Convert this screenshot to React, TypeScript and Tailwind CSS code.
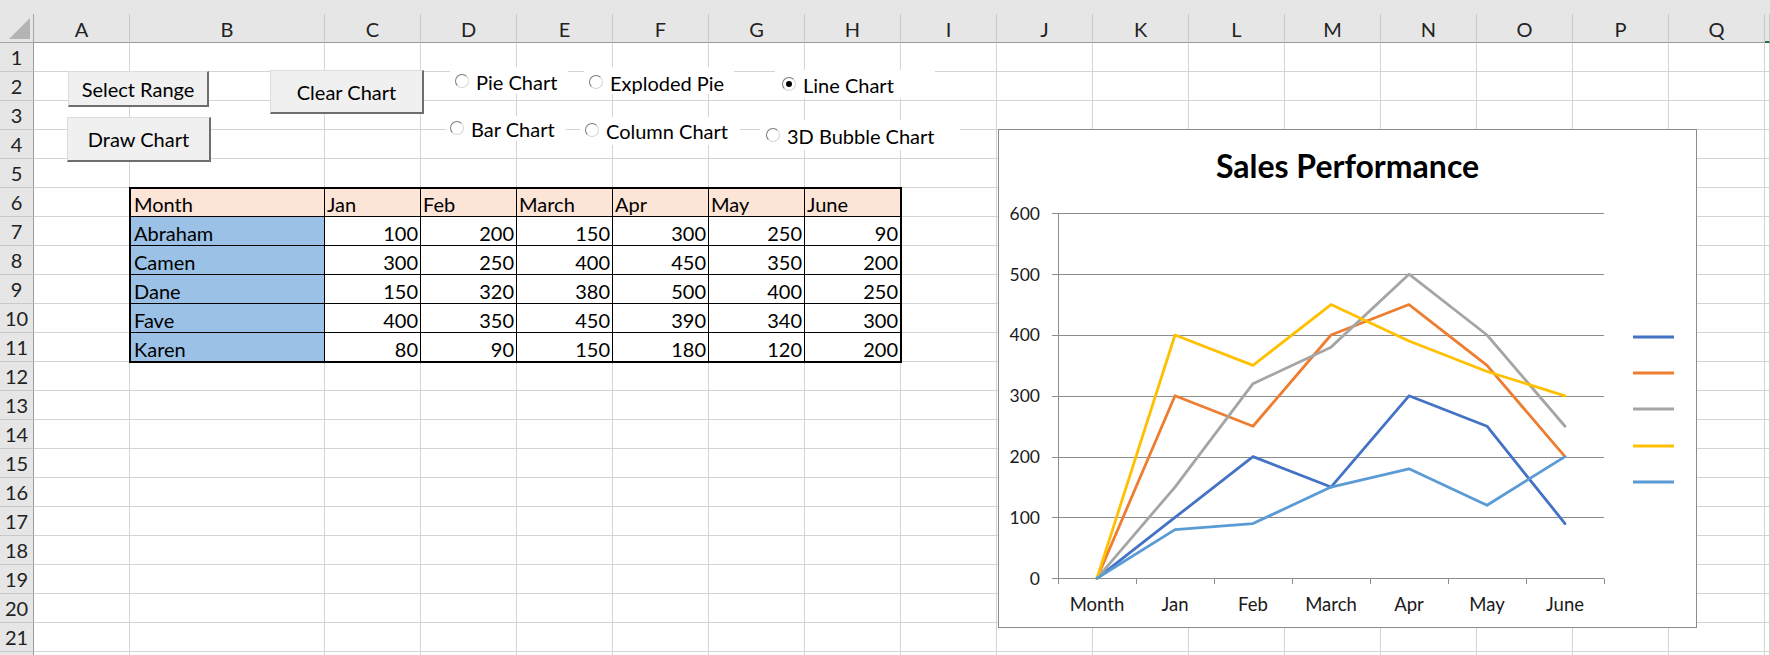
import React from 'react'

const COLS = ['A', 'B', 'C', 'D', 'E', 'F', 'G', 'H', 'I', 'J', 'K', 'L', 'M', 'N', 'O', 'P', 'Q', 'R']
const ROWS = Array.from({ length: 22 }, (_, i) => i + 1)

const MONTHS = ['Jan', 'Feb', 'March', 'Apr', 'May', 'June']
const PEOPLE = [
  { name: 'Abraham', values: [100, 200, 150, 300, 250, 90], color: '#4472c4' },
  { name: 'Camen', values: [300, 250, 400, 450, 350, 200], color: '#ed7d31' },
  { name: 'Dane', values: [150, 320, 380, 500, 400, 250], color: '#a5a5a5' },
  { name: 'Fave', values: [400, 350, 450, 390, 340, 300], color: '#ffc000' },
  { name: 'Karen', values: [80, 90, 150, 180, 120, 200], color: '#5b9bd5' },
]

const RADIOS = [
  { label: 'Pie Chart', box: 'left-[450px] top-[67px] w-[118px] h-[27px] pl-[5px] pt-[5px]' },
  { label: 'Exploded Pie', box: 'left-[584px] top-[67px] w-[150px] h-[27px] pl-[5px] pt-[6px]' },
  { label: 'Line Chart', box: 'left-[775px] top-[70px] w-[160px] h-[28px] pl-[7px] pt-[5px]', checked: true },
  { label: 'Bar Chart', box: 'left-[446px] top-[116px] w-[120px] h-[25px] pl-[4px] pt-[3px]' },
  { label: 'Column Chart', box: 'left-[580px] top-[117px] w-[160px] h-[28px] pl-[5px] pt-[4px]' },
  { label: '3D Bubble Chart', box: 'left-[760px] top-[120px] w-[200px] h-[30px] pl-[6px] pt-[6px]' },
]

// cells under the data table are skipped so grid auto-placement stays right
const inTable = (row: number, col: number) => row >= 6 && row <= 11 && col >= 1 && col <= 7

function DataTable() {
  return (
    <div className="col-start-3 col-end-10 row-start-7 row-end-13 -m-px relative z-10 border-2 border-black bg-black grid grid-cols-[193px_repeat(6,95px)] grid-rows-[27px_repeat(5,28px)] gap-px text-[20px] leading-[20px] text-black">
      <div className="bg-[#fce4d6] flex items-end pl-[3px] pb-[2px]">Month</div>
      {MONTHS.map((m) => (
        <div key={m} className="bg-[#fce4d6] flex items-end pl-[2px] pb-[2px]">
          {m}
        </div>
      ))}
      {PEOPLE.map((p) => (
        <React.Fragment key={p.name}>
          <div className="bg-[#9bc2e6] flex items-end pl-[3px] pb-[2px]">{p.name}</div>
          {p.values.map((v, i) => (
            <div key={i} className="bg-white flex items-end justify-end pr-[2px] pb-[2px]">
              {v}
            </div>
          ))}
        </React.Fragment>
      ))}
    </div>
  )
}

function XlButton({ className, children }: { className: string; children: React.ReactNode }) {
  return (
    <div
      className={`absolute z-20 flex items-center justify-center bg-[#f0f0f0] border-t border-l border-[#dcdcdc] border-r-2 border-b-2 border-r-[#6e6e6e] border-b-[#6e6e6e] text-[20px] leading-[20px] text-black ${className}`}
    >
      {children}
    </div>
  )
}

function Radio({ label, box, checked }: { label: string; box: string; checked?: boolean }) {
  return (
    <div className={`absolute z-20 flex items-start gap-[7px] bg-white ${box}`}>
      <span className="mt-[2px] w-[14px] h-[14px] rounded-full border border-t-[#7c7c7c] border-l-[#7c7c7c] border-b-[#d6d6d6] border-r-[#d6d6d6] bg-white flex items-center justify-center">
        {checked && <span className="w-[6px] h-[6px] rounded-full bg-black" />}
      </span>
      <span className="text-[20px] leading-[20px] text-black whitespace-nowrap">{label}</span>
    </div>
  )
}

function Chart() {
  const yOf = (v: number) => 449.3 - v * 0.6083
  const xOf = (i: number) => 99 + 78 * i
  const snap = (y: number) => Math.round(y) + 0.5
  const ticks = [0, 100, 200, 300, 400, 500, 600]
  const legendY = [208, 244, 280, 317, 353]

  return (
    <div className="absolute left-[998px] top-[129px] w-[699px] h-[499px] z-20 border border-[#8c8c8c] bg-white">
      <div className="h-[55px] pt-[17px] text-center text-[32px] leading-[38px] font-bold text-black">
        Sales Performance
      </div>
      <svg width="697" height="442" viewBox="1 56 697 442" className="block" fontFamily="Lato, sans-serif">
        {ticks.map((t) => (
          <g key={t}>
            <line x1="54" x2="606" y1={snap(yOf(t))} y2={snap(yOf(t))} stroke="#8c8c8c" strokeWidth="1" />
            <text x="42" y={yOf(t) + 6.5} textAnchor="end" fontSize="17.5" fill="#1a1a1a">
              {t}
            </text>
          </g>
        ))}
        <line x1="60.5" x2="60.5" y1={snap(yOf(600))} y2={snap(yOf(0))} stroke="#8c8c8c" strokeWidth="1" />
        {Array.from({ length: 8 }, (_, i) => (
          <line key={i} x1={60.5 + 78 * i} x2={60.5 + 78 * i} y1={snap(yOf(0))} y2="455" stroke="#8c8c8c" strokeWidth="1" />
        ))}
        {['Month', ...MONTHS].map((m, i) => (
          <text key={m} x={xOf(i)} y="482" textAnchor="middle" fontSize="18.5" fill="#1a1a1a">
            {m}
          </text>
        ))}
        {PEOPLE.map((p) => (
          <polyline
            key={p.name}
            fill="none"
            stroke={p.color}
            strokeWidth="2.8"
            strokeLinejoin="round"
            strokeLinecap="round"
            points={[0, ...p.values].map((v, i) => `${xOf(i)},${yOf(v)}`).join(' ')}
          />
        ))}
        {PEOPLE.map((p, i) => (
          <line key={p.name} x1="635" x2="676" y1={legendY[i]} y2={legendY[i]} stroke={p.color} strokeWidth="3" />
        ))}
      </svg>
    </div>
  )
}

export default function App() {
  return (
    <div className="relative w-[1770px] h-[655px] overflow-hidden bg-white font-[Lato,sans-serif]">
      <div className="h-[14px] bg-[#e6e6e6]" />
      <div className="grid grid-cols-[34px_96px_195px_repeat(15,96px)_5px] auto-rows-[29px]">
        <div className="bg-[#e6e6e6] border-r border-b border-[#a6a6a6]">
          <svg width="33" height="28" className="block">
            <polygon points="30,4 30,25 9,25" fill="#b4b4b4" />
          </svg>
        </div>
        {COLS.map((c) => (
          <div
            key={c}
            className={`bg-[#e6e6e6] border-r border-r-[#c8c8c8] flex items-center justify-center pt-[2px] text-[20px] text-[#222] ${
              c === 'R' ? 'border-b-2 border-b-[#217346]' : 'border-b border-b-[#9b9b9b]'
            }`}
          >
            {c === 'R' ? '' : c}
          </div>
        ))}
        {ROWS.map((r) => (
          <React.Fragment key={r}>
            <div className="bg-[#e6e6e6] border-r border-r-[#9b9b9b] border-b border-b-[#c8c8c8] flex items-center justify-center text-[20px] text-[#222]">
              {r < 22 ? r : ''}
            </div>
            {COLS.map((c, ci) =>
              inTable(r, ci) ? null : <div key={c} className="border-r border-b border-[#d4d4d4]" />
            )}
          </React.Fragment>
        ))}
        <DataTable />
      </div>

      <XlButton className="left-[68px] top-[71px] w-[141px] h-[36px]">Select Range</XlButton>
      <XlButton className="left-[270px] top-[70px] w-[154px] h-[44px]">Clear Chart</XlButton>
      <XlButton className="left-[67px] top-[117px] w-[144px] h-[45px]">Draw Chart</XlButton>

      {RADIOS.map((r) => (
        <Radio key={r.label} label={r.label} box={r.box} checked={r.checked} />
      ))}

      <Chart />
    </div>
  )
}
